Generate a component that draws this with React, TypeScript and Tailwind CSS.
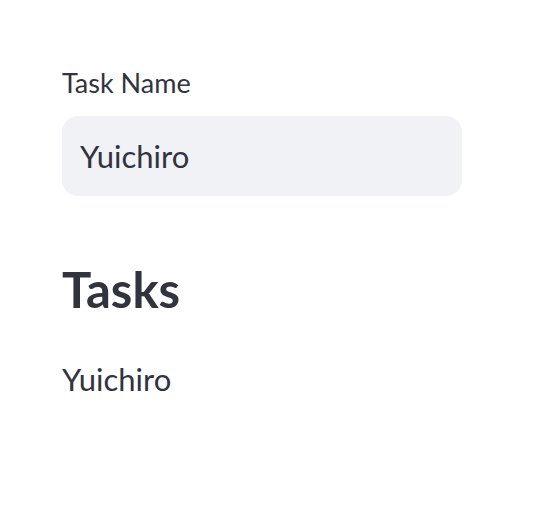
export default function App() {
  return (
    <div className="w-[536px] h-[522px] bg-white pl-[62px] pt-[65px] text-[#31333f]" style={{ fontFamily: "Lato, 'Noto Sans', sans-serif" }}>
      <div className="text-[27px] leading-[36px]">Task Name</div>
      <div className="mt-[15px] w-[400px] h-[80px] rounded-[16px] bg-[#f0f2f6] flex items-center pl-[18px] text-[31px]">Yuichiro</div>
      <div className="mt-[63px] text-[49px] leading-[60px] font-bold">Tasks</div>
      <div className="mt-[40px] text-[31px] leading-[40px]">Yuichiro</div>
    </div>
  );
}
